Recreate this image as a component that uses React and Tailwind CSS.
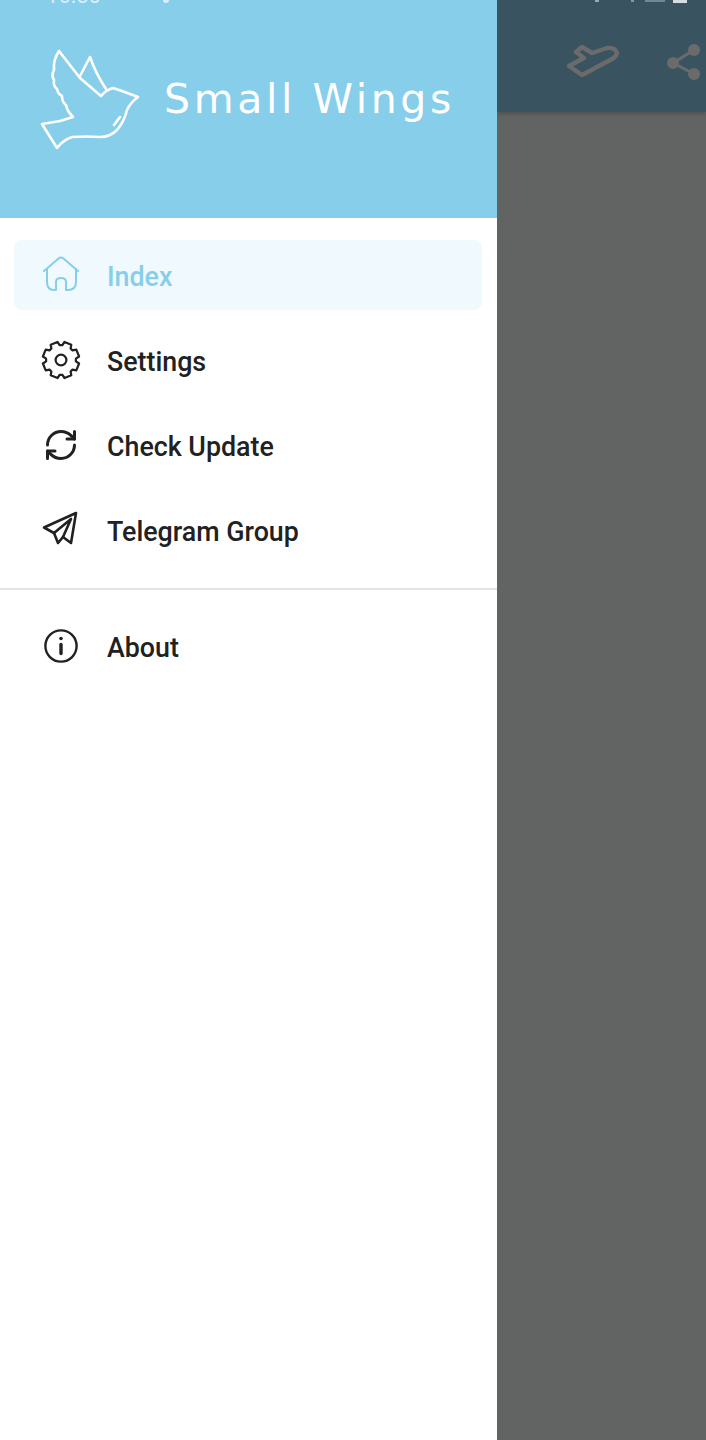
import React from 'react';
import { RefreshCw } from 'lucide-react';

// 8 tooth cog outline, same look as the settings icon in the drawer
const gearPoints = () => {
  const pts = [];
  for (let i = 0; i < 8; i++) {
    const a = (i * Math.PI) / 4 + Math.PI / 8;
    [[-0.3, 15], [-0.2, 18.4], [0.2, 18.4], [0.3, 15]].forEach(([d, r]) => {
      pts.push(`${(20 + r * Math.cos(a + d)).toFixed(1)},${(20 + r * Math.sin(a + d)).toFixed(1)}`);
    });
  }
  return pts.join(' ');
};

const HomeIcon = () => (
  <svg width="40" height="40" viewBox="0 0 40 40" fill="none" stroke="currentColor" strokeWidth="2" strokeLinecap="round" strokeLinejoin="round">
    <path d="M3 16 L17.5 3.5 Q20 1.5 22.5 3.5 L37 16" />
    <path d="M6 14 V27 Q6 35 13 35 H15 V27 Q15 23 20 23 Q25 23 25 27 V35 H27 Q35 35 35 27 V14" />
  </svg>
);

const GearIcon = () => (
  <svg width="40" height="40" viewBox="0 0 40 40" fill="none" stroke="currentColor" strokeWidth="2.2" strokeLinejoin="round">
    <polygon points={gearPoints()} />
    <circle cx="20" cy="20" r="5.4" />
  </svg>
);

const PlaneIcon = () => (
  <svg width="40" height="40" viewBox="0 0 40 40" fill="none" stroke="currentColor" strokeWidth="2.6" strokeLinejoin="round" strokeLinecap="round">
    <path d="M35 3 L3 17.5 L13 23 L17 33 L22 27 L30 33 Z" />
    <path d="M13 23 L30 9 L22 27" />
  </svg>
);

const InfoIcon = () => (
  <svg width="40" height="40" viewBox="0 0 40 40" fill="none" stroke="currentColor" strokeWidth="2.4" strokeLinecap="round">
    <circle cx="20" cy="20" r="15.6" />
    <circle cx="20" cy="12.5" r="1.8" fill="currentColor" stroke="none" />
    <path d="M20 18.5 V27.5" strokeWidth="3.4" />
  </svg>
);

const BirdLogo = () => (
  <svg width="106" height="106" viewBox="36 46 106 106" fill="none" stroke="#fff" strokeWidth="2.6" strokeLinejoin="round" strokeLinecap="round">
    <path d="M59 51 Q53 60 54 70 Q51 76 54 80 Q53 86 57 89 Q58 94 62 96 Q62 102 66 105 Q67 111 73 117 L60 121 L42 124 L57 148 Q63 140 72 137 Q86 136 100 137 Q110 137 117 130 Q124 122 127 110 Q131 102 138 97 L122 91 L113 88 Q106 90 101 96 L80 78 Z" />
    <path d="M80 76 L90 57 Q96 74 106 89" />
    <path d="M114 125 L120 117" />
  </svg>
);

const StatusFragments = () => (
  <div className="flex h-[4px] items-end overflow-hidden pl-[46px]">
    <span className="font-['Roboto',sans-serif] text-[22px] leading-[17px] text-white/70">16:50</span>
    <span className="mb-[1px] ml-[62px] h-[3px] w-[6px] rounded-b-full bg-white/70" />
  </div>
);

const items = [
  { label: 'Index', icon: <HomeIcon />, active: true },
  { label: 'Settings', icon: <GearIcon /> },
  { label: 'Check Update', icon: <RefreshCw size={36} strokeWidth={2} /> },
  { label: 'Telegram Group', icon: <PlaneIcon /> },
];

const DrawerItem = ({ label, icon, active }) => (
  <div className={`ml-[14px] mr-[15px] flex h-[70px] items-center gap-[26px] rounded-lg pl-[27px] ${active ? 'bg-[#f0f9fe] text-[#87ceeb]' : 'text-[#212121]'}`}>
    <span className="flex w-[40px] shrink-0 justify-center">{icon}</span>
    <span className="pt-[4px] font-['Roboto',sans-serif] text-[26.8px] font-medium leading-none">{label}</span>
  </div>
);

export default function App() {
  return (
    <div className="flex h-[1440px] w-[706px] overflow-hidden bg-[#626463]">
      <aside className="relative z-10 flex h-full w-[497px] shrink-0 flex-col bg-white">
        <header className="h-[218px] bg-[#87ceeb]">
          <StatusFragments />
          <div className="flex items-center pl-[36px] pt-[42px]">
            <BirdLogo />
            <h1 className="ml-[22px] mt-[1px] font-['DejaVu_Sans',sans-serif] text-[41px] font-normal leading-none tracking-[3.6px] text-white">Small Wings</h1>
          </div>
        </header>
        <nav className="flex flex-col gap-[15px] pt-[22px]">
          {items.map((item) => (
            <DrawerItem key={item.label} {...item} />
          ))}
        </nav>
        <div className="mt-[23px] h-[2px] bg-[#e4e4e4]" />
        <div className="mt-[21px]">
          <DrawerItem label="About" icon={<InfoIcon />} />
        </div>
      </aside>
      <main className="flex-1">
        <div className="h-[112px] bg-[#3a5360] shadow-[0_2px_4px_rgba(0,0,0,0.2)]">
          <div className="flex h-[4px] items-start overflow-hidden">
            <span className="ml-[98px] h-[2px] w-[4px] bg-white/50" />
            <span className="ml-[32px] h-[2px] w-[3px] bg-white/40" />
            <span className="ml-[11px] h-[2px] w-[20px] bg-white/30" />
            <span className="ml-[8px] h-[3px] w-[14px] bg-white/80" />
          </div>
          <div className="flex items-center pl-[70px] pt-[40px]">
            <svg width="52" height="34" viewBox="568 46 52 34" fill="none" stroke="#6b6b6b" strokeWidth="4.4" strokeLinejoin="round">
              <path d="M583 48 L593 54 L608 49 Q616 48 618 54 Q617 58 613 60 L583 76 L570 67 L585 59 L577 53 Z" />
            </svg>
            <svg className="ml-[48px] shrink-0" width="38" height="36" viewBox="670 43 38 36" fill="#6b6b6b" stroke="#6b6b6b" strokeWidth="3">
              <path d="M697 49 L676 62 L697 73" fill="none" />
              <circle cx="697" cy="49" r="4.5" />
              <circle cx="676" cy="62" r="4.5" />
              <circle cx="697" cy="73" r="4.5" />
            </svg>
          </div>
        </div>
      </main>
    </div>
  );
}
